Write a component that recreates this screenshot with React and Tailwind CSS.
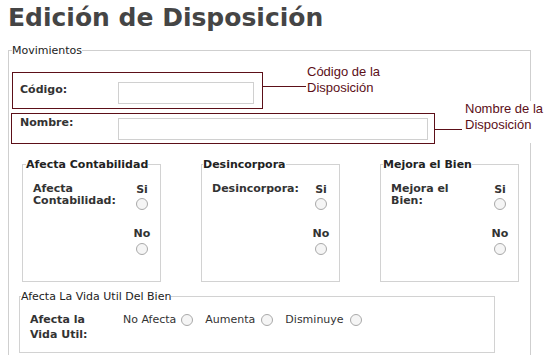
import React from 'react'

const maroon = 'bg-[#5c0f18]'

const Radio = ({ className = '' }) => (
  <span className={`block w-[12px] h-[12px] rounded-full border border-[#a9a9a9] bg-[#f5f5f5] ${className}`}></span>
)

const YesNoBox = ({ title, label, legendClass, className = '' }) => (
  <fieldset className={`w-[139px] border border-[#d2d2d2] ${className}`}>
    <legend className={`font-bold leading-[13px] text-[#222] ${legendClass}`}>{title}</legend>
    <div className="h-[110px] flex justify-between pl-[10px]">
      <div className="w-[90px] mt-[12px] leading-[12px] font-bold text-[#333]">{label}</div>
      <div className="w-[24px] mr-[6px] mt-[13px] flex flex-col items-center font-bold text-[#333] leading-[12px]">
        <span>Si</span>
        <Radio className="mt-[2px]" />
        <span className="mt-[18px]">No</span>
        <Radio className="mt-[3px]" />
      </div>
    </div>
  </fieldset>
)

const Callout = ({ top, lineTop, lineWidth, gap, pad, children }) => (
  <div className="absolute left-full flex items-start" style={{ top }}>
    <span className={`block h-px ${maroon}`} style={{ width: lineWidth, marginTop: lineTop }}></span>
    <div
      className="bg-white whitespace-nowrap text-[#5c0f18] font-['Liberation_Sans',Arial,sans-serif] text-[13px] leading-[16px]"
      style={{ marginLeft: gap, paddingBottom: pad }}
    >
      {children}
    </div>
  </div>
)

export default function App() {
  return (
    <div className="w-[549px] h-[355px] overflow-hidden bg-white font-['DejaVu_Sans',Verdana,sans-serif] text-[11px] text-[#333]">
      <h1 className="pl-[8px] pt-[3px] text-[25px] leading-[29px] font-bold text-[#454545]">Edición de Disposición</h1>

      <fieldset className="mt-[12px] ml-[8px] w-[523px] border border-[#cfcfcf] pb-[20px]">
        <legend className="ml-[3px] leading-[13px] text-[#222]">Movimientos</legend>

        <div className="relative mt-[15px] ml-[3px] w-[251px] h-[37px] border border-[#5c0f18] flex items-start pl-[7px]">
          <span className="w-[98px] mt-[10px] leading-[13px] font-bold">Código:</span>
          <span className="block mt-[9px] w-[136px] h-[22px] border border-[#d0d0d0] bg-white"></span>
          <Callout top="-9px" lineTop="22px" lineWidth="44px" gap="1px" pad="0px">
            Código de la<br />Disposición
          </Callout>
        </div>

        <div className="relative mt-[4px] ml-[2px] w-[424px] h-[31px] border border-[#5c0f18] flex items-start pl-[8px]">
          <span className="w-[98px] mt-[2px] leading-[13px] font-bold">Nombre:</span>
          <span className="block mt-[4px] w-[310px] h-[22px] border border-[#d0d0d0] bg-white"></span>
          <Callout top="-13px" lineTop="28px" lineWidth="28px" gap="3px" pad="10px">
            Nombre de la<br />Disposición
          </Callout>
        </div>

        <div className="mt-[14px] ml-[13px] flex">
          <YesNoBox title="Afecta Contabilidad" label="Afecta Contabilidad:" legendClass="ml-[3px]" />
          <YesNoBox title="Desincorpora" label="Desincorpora:" legendClass="ml-[1px]" className="ml-[40px] w-[137px]" />
          <YesNoBox title="Mejora el Bien" label="Mejora el Bien:" legendClass="ml-[2px]" className="ml-[40px]" />
        </div>

        <fieldset className="mt-[8px] ml-[10px] w-[476px] border border-[#d2d2d2]">
          <legend className="ml-[1px] leading-[13px] text-[#222]">Afecta La Vida Util Del Bien</legend>
          <div className="h-[49px] flex items-start pl-[10px]">
            <div className="w-[93px] mt-[9px] leading-[15px] font-bold">Afecta la<br />Vida Util:</div>
            <div className="mt-[10px] flex items-center leading-[13px]">
              <span>No Afecta</span>
              <Radio className="ml-[5px]" />
              <span className="ml-[12px]">Aumenta</span>
              <Radio className="ml-[6px]" />
              <span className="ml-[12px]">Disminuye</span>
              <Radio className="ml-[6px]" />
            </div>
          </div>
        </fieldset>
      </fieldset>
    </div>
  )
}
